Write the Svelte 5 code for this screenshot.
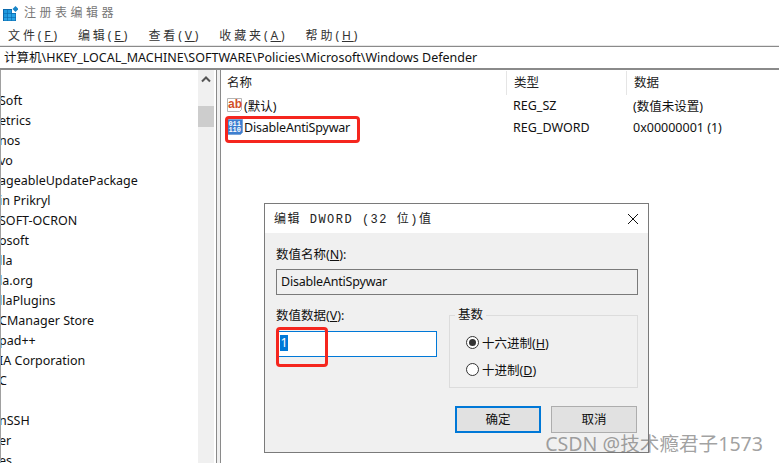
<script>
  const menus = [
    ['文件', 'F'],
    ['编辑', 'E'],
    ['查看', 'V'],
    ['收藏夹', 'A'],
    ['帮助', 'H'],
  ];

  const keys = [
    'Soft', 'etrics', 'nos', 'vo', 'ageableUpdatePackage', 'in Prikryl', 'SOFT-OCRON',
    'osoft', 'lla', 'la.org', 'llaPlugins', 'CManager Store', 'pad++', 'IA Corporation',
    'C', '', 'nSSH', 'er', 'es',
  ];
</script>

<div class="window">
  <header class="titlebar">
    <svg class="app-icon" width="17" height="18" viewBox="0 0 17 18">
      <path d="M2 6h9v4h4v8H2z" fill="#0a69ad" />
      <rect x="3" y="7" width="3.4" height="3.2" fill="#1f9ade" />
      <rect x="7" y="7" width="3.4" height="3.2" fill="#1f9ade" />
      <rect x="3" y="10.8" width="3.4" height="3.2" fill="#1f9ade" />
      <rect x="7" y="10.8" width="3.4" height="3.2" fill="#2aa4e6" />
      <rect x="11" y="10.8" width="3.4" height="3.2" fill="#2aa4e6" />
      <rect x="3" y="14.6" width="3.4" height="2.9" fill="#2aa4e6" />
      <rect x="7" y="14.6" width="3.4" height="2.9" fill="#2aa4e6" />
      <rect x="11" y="14.6" width="3.4" height="2.9" fill="#2aa4e6" />
      <path d="M14.5 3l3 3-3 3-3-3z" fill="#1a86c8" />
    </svg>
    <span class="app-title">注册表编辑器</span>
  </header>

  <nav class="menubar">
    {#each menus as [label, key]}
      <span class="menu">{label}(<u>{key}</u>)</span>
    {/each}
  </nav>

  <div class="address">计算机\HKEY_LOCAL_MACHINE\SOFTWARE\Policies\Microsoft\Windows Defender</div>

  <main class="panes">
    <section class="tree">
      <ul>
        {#each keys as key}
          <li>{key}</li>
        {/each}
      </ul>
    </section>
    <div class="scrollbar">
      <svg class="arrow" width="16" height="16" viewBox="0 0 16 16">
        <path d="M4 9.5l4-4 4 4" fill="none" stroke="#555" stroke-width="2" />
      </svg>
      <div class="thumb"></div>
    </div>
    <div class="splitter"></div>
    <section class="values">
      <div class="row heads">
        <span class="col-name">名称</span>
        <span class="col-type">类型</span>
        <span class="col-data">数据</span>
      </div>
      <div class="row">
        <span class="col-name with-icon">
          <svg width="16" height="18" viewBox="0 0 16 18">
            <path d="M.5 2.5h14v11l-2 2H.5z" fill="#fff" stroke="#b5b5b5" />
            <text x="1" y="12" class="ab">ab</text>
          </svg>
          <span>(默认)</span>
        </span>
        <span class="col-type">REG_SZ</span>
        <span class="col-data">(数值未设置)</span>
      </div>
      <div class="row">
        <span class="col-name with-icon">
          <svg width="16" height="18" viewBox="0 0 16 18">
            <path d="M.5 1.5h15v13l-2 2H.5z" fill="#3d7fd0" stroke="#7aa5d8" />
            <text x="1.4" y="7.6" class="bits">011</text>
            <text x="1.4" y="14.4" class="bits">110</text>
          </svg>
          <span class="name">DisableAntiSpywar</span>
        </span>
        <span class="col-type">REG_DWORD</span>
        <span class="col-data">0x00000001 (1)</span>
      </div>
    </section>
  </main>

  <div class="callout callout-value"></div>

  <div class="dialog">
    <div class="dialog-title">
      <span class="dialog-caption">编辑 DWORD (32 位)值</span>
      <svg width="12" height="12" viewBox="0 0 12 12">
        <path d="M1 1l10 10M11 1L1 11" stroke="#111" stroke-width="1" />
      </svg>
    </div>
    <div class="dialog-body">
      <label class="field-label" for="value-name">数值名称(<u>N</u>):</label>
      <div class="readonly" id="value-name"><span class="name">DisableAntiSpywar</span></div>
      <div class="lower">
        <div class="data-col">
          <div class="field-label">数值数据(<u>V</u>):</div>
          <div class="data-input"><span class="selected">1</span></div>
        </div>
        <fieldset class="radix">
          <legend>基数</legend>
          <div class="radio"><span class="dot on"></span><span>十六进制(<u>H</u>)</span></div>
          <div class="radio"><span class="dot"></span><span>十进制(<u>D</u>)</span></div>
        </fieldset>
      </div>
      <div class="buttons">
        <div class="btn primary">确定</div>
        <div class="btn">取消</div>
      </div>
    </div>
  </div>

  <div class="callout callout-data"></div>
  <div class="watermark">CSDN @技术瘾君子1573</div>
</div>

<style>
  :global(body) {
    margin: 0;
    background: #fff;
  }

  .window {
    position: relative;
    width: 779px;
    height: 463px;
    overflow: hidden;
    background: #fff;
    color: #111;
    font: 12.5px "Noto Sans", "Noto Sans CJK SC", sans-serif;
  }

  .titlebar {
    display: flex;
    align-items: center;
    height: 23px;
    padding-left: 1px;
    gap: 6px;
  }

  .app-title {
    color: #777;
    font-size: 12px;
    letter-spacing: 3.5px;
  }

  .menubar {
    display: flex;
    align-items: center;
    height: 23px;
    padding-left: 8px;
    gap: 18px;
  }

  .menu {
    color: #333;
    font-size: 12px;
    letter-spacing: 2.9px;
  }

  .address {
    box-sizing: border-box;
    height: 24px;
    padding-left: 4px;
    line-height: 21px;
    white-space: nowrap;
    border-top: 1px solid #8a8a8a;
    border-bottom: 2px solid #8a8a8a;
    box-shadow: 0 -1px 0 #e6e6e6;
  }

  .panes {
    display: flex;
    height: 394px;
  }

  .tree {
    width: 198px;
    overflow: hidden;
    border-left: 1px solid #a0a0a0;
    box-sizing: border-box;
  }

  .tree ul {
    margin: 21px 0 0 -2px;
    padding: 0;
    list-style: none;
  }

  .tree li {
    height: 20px;
    line-height: 20px;
    white-space: nowrap;
  }

  .scrollbar {
    width: 16px;
    background: #f0f0f0;
  }

  .arrow {
    display: block;
    margin-top: 2px;
  }

  .thumb {
    height: 21px;
    margin-top: 18px;
    background: #cdcdcd;
  }

  .splitter {
    width: 3px;
    margin-left: 2px;
    background: #f0f0f0;
    border-left: 1px solid #8a8a8a;
    border-right: 1px solid #8a8a8a;
  }

  .values {
    flex: 1;
    padding-top: 1px;
  }

  .row {
    display: flex;
    align-items: center;
    height: 22px;
    white-space: nowrap;
  }

  .heads {
    align-items: flex-start;
    height: 24px;
    margin-bottom: -1px;
    color: #222;
  }

  .col-name {
    width: 285px;
    padding-left: 6px;
    box-sizing: border-box;
  }

  .col-type {
    width: 120px;
    padding-left: 7px;
    box-sizing: border-box;
  }

  .heads .col-type,
  .heads .col-data {
    height: 24px;
    line-height: 23px;
    border-left: 1px solid #e5e5e5;
  }

  .heads .col-name {
    line-height: 23px;
  }

  .col-data {
    padding-left: 7px;
  }

  .with-icon {
    display: flex;
    align-items: center;
    gap: 1px;
  }

  .name {
    letter-spacing: -.2px;
  }

  .ab {
    font: bold 12px "Liberation Sans", sans-serif;
    fill: #d2502a;
  }

  .bits {
    font: bold 7px "Liberation Mono", monospace;
    fill: #fff;
  }

  .callout {
    position: absolute;
    box-sizing: border-box;
    border: 3px solid #f5261e;
    border-radius: 4px;
  }

  .callout-value {
    left: 225px;
    top: 116px;
    width: 135px;
    height: 27px;
  }

  .callout-data {
    left: 276px;
    top: 327px;
    width: 52px;
    height: 40px;
  }

  .dialog {
    position: absolute;
    left: 264px;
    top: 203px;
    width: 385px;
    height: 250px;
    box-sizing: border-box;
    border: 1px solid #7a7a7a;
    background: #f0f0f0;
  }

  .dialog-title {
    display: flex;
    align-items: center;
    justify-content: space-between;
    height: 29px;
    padding: 0 9px;
    background: #fff;
  }

  .dialog-caption {
    margin-bottom: 2px;
    color: #222;
    font: 12px "Liberation Mono", "Noto Sans CJK SC", monospace;
    letter-spacing: 1.5px;
  }

  .dialog-body {
    padding: 12px 10px 0 11px;
  }

  .field-label {
    display: block;
    line-height: 20px;
  }

  .readonly {
    box-sizing: border-box;
    height: 26px;
    margin-top: 4px;
    padding-left: 4px;
    line-height: 23px;
    border: 1px solid #7a7a7a;
  }

  .lower {
    display: flex;
    gap: 12px;
    margin-top: 11px;
  }

  .data-col {
    width: 161px;
  }

  .data-input {
    box-sizing: border-box;
    height: 26px;
    margin-top: 5px;
    padding: 3px 0 0 3px;
    background: #fff;
    border: 1px solid #0078d7;
  }

  .selected {
    display: block;
    width: 8px;
    height: 16px;
    line-height: 16px;
    color: #fff;
    text-align: center;
    background: #0078d7;
  }

  .radix {
    box-sizing: border-box;
    width: 189px;
    height: 80px;
    margin: 2px 0 0;
    padding: 7px 0 0 16px;
    border: 1px solid #dcdcdc;
  }

  .radix legend {
    margin-left: -11px;
    padding: 0 3px;
    line-height: 14px;
  }

  .radio {
    display: flex;
    align-items: center;
    gap: 3px;
    height: 27px;
  }

  .dot {
    position: relative;
    box-sizing: border-box;
    width: 13px;
    height: 13px;
    background: #fff;
    border: 1px solid #333;
    border-radius: 50%;
  }

  .dot.on::after {
    content: "";
    position: absolute;
    inset: 2px;
    background: #333;
    border-radius: 50%;
  }

  .buttons {
    display: flex;
    justify-content: flex-end;
    gap: 10px;
    margin: 18px 1px 0 0;
  }

  .btn {
    box-sizing: border-box;
    width: 86px;
    height: 27px;
    line-height: 25px;
    text-align: center;
    background: #e1e1e1;
    border: 1px solid #adadad;
  }

  .btn.primary {
    line-height: 23px;
    border: 2px solid #0078d7;
  }

  .watermark {
    position: absolute;
    right: 16px;
    bottom: 6px;
    color: rgba(120, 120, 120, .7);
    font: 19.6px "Noto Sans", "Noto Sans CJK SC", sans-serif;
    white-space: nowrap;
  }
</style>
